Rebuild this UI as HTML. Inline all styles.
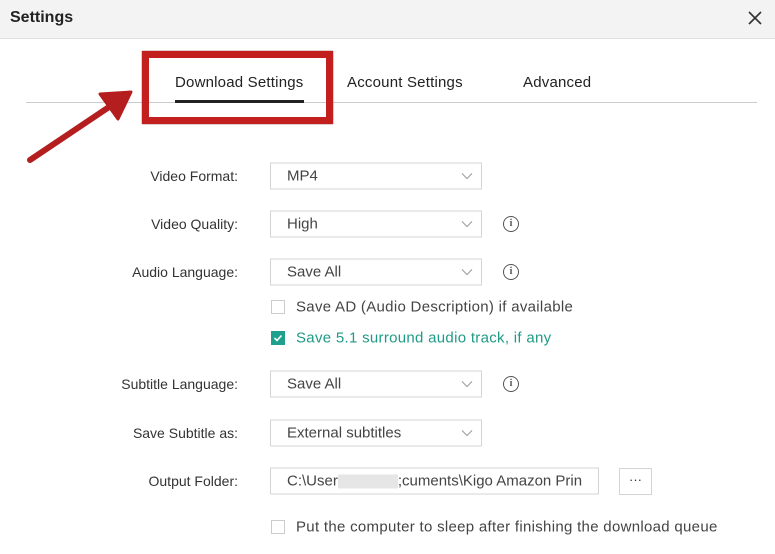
<html><head><style>
body{margin:0;width:775px;height:554px;background:#fff;font-family:"Liberation Sans",sans-serif;position:relative;overflow:hidden;color:#333}
.a{position:absolute}
.lbl{position:absolute;right:537px;font-size:14px;color:#333;transform:translateY(-50%)}
.sel{position:absolute;left:270px;width:210px;height:25px;border:1px solid #d4d4d4;transform:translateY(-50%);font-size:15px;color:#444;line-height:25px;box-sizing:content-box}
.sel span{margin-left:16px}
.sel svg{position:absolute;right:8px;top:9px}
.info{position:absolute;left:503px;width:14px;height:14px;border:1.3px solid #555;border-radius:50%;transform:translateY(-50%);font:bold 10px "Liberation Serif",serif;text-align:center;line-height:14px;color:#555}
.cb{position:absolute;left:271px;width:12px;height:12px;border:1px solid #ccc;transform:translateY(-50%)}
.ct{position:absolute;left:296px;font-size:15px;letter-spacing:0.3px;transform:translateY(-50%);color:#444;white-space:nowrap}
.tab{position:absolute;top:74px;font-size:15px;color:#222;letter-spacing:0.2px}
</style></head><body>
<div class="a" style="left:0;top:0;width:775px;height:38px;background:#f3f3f3;border-bottom:1px solid #e0e0e0"></div>
<div class="a" style="left:10px;top:9px;font-weight:bold;font-size:16px;color:#222">Settings</div>
<svg class="a" style="left:748px;top:11px" width="14" height="14"><path d="M1 1L13 13M13 1L1 13" stroke="#333" stroke-width="1.6"/></svg>
<div class="a" style="left:26px;top:102px;width:731px;height:1px;background:#ccc"></div>
<div class="tab" style="left:175px">Download Settings</div>
<div class="a" style="left:175px;top:100px;width:129px;height:3px;background:#222"></div>
<div class="tab" style="left:347px">Account Settings</div>
<div class="tab" style="left:523px">Advanced</div>
<div class="a" style="left:142px;top:51px;width:177px;height:59px;border:7px solid #c41f1f;box-shadow:0 0 1px #600"></div>
<svg class="a" style="left:0;top:0" width="775" height="554"><line x1="30" y1="160" x2="118" y2="101" stroke="#b41e1e" stroke-width="6" stroke-linecap="round"/><path d="M100 94 L131 92 L118 119 Z" fill="#b41e1e" stroke="#b41e1e" stroke-width="3" stroke-linejoin="round"/></svg>

<div class="lbl" style="top:176px">Video Format:</div>
<div class="sel" style="top:176px"><span>MP4</span><svg width="12" height="7"><path d="M1 1l5 5 5-5" fill="none" stroke="#999"/></svg></div>
<div class="lbl" style="top:224px">Video Quality:</div>
<div class="sel" style="top:224px"><span>High</span><svg width="12" height="7"><path d="M1 1l5 5 5-5" fill="none" stroke="#999"/></svg></div>
<div class="info" style="top:224px">i</div>
<div class="lbl" style="top:272px">Audio Language:</div>
<div class="sel" style="top:272px"><span>Save All</span><svg width="12" height="7"><path d="M1 1l5 5 5-5" fill="none" stroke="#999"/></svg></div>
<div class="info" style="top:272px">i</div>
<div class="cb" style="top:307px"></div><div class="ct" style="top:307px">Save AD (Audio Description) if available</div>
<div class="cb" style="top:338px;background:#1fa08c;border-color:#1fa08c"><svg width="12" height="12" style="position:absolute;left:0;top:0"><path d="M2.5 6l2.5 2.5 4.5-5" fill="none" stroke="#fff" stroke-width="1.6"/></svg></div><div class="ct" style="top:338px;color:#1f9a86">Save 5.1 surround audio track, if any</div>
<div class="lbl" style="top:384px">Subtitle Language:</div>
<div class="sel" style="top:384px"><span>Save All</span><svg width="12" height="7"><path d="M1 1l5 5 5-5" fill="none" stroke="#999"/></svg></div>
<div class="info" style="top:384px">i</div>
<div class="lbl" style="top:433px">Save Subtitle as:</div>
<div class="sel" style="top:433px"><span>External subtitles</span><svg width="12" height="7"><path d="M1 1l5 5 5-5" fill="none" stroke="#999"/></svg></div>
<div class="lbl" style="top:481px">Output Folder:</div>
<div class="sel" style="top:481px;width:327px;overflow:hidden;white-space:nowrap"><span>C:\User<span style="display:inline-block;width:60px;height:14px;background:#e6e6e6;margin:0;vertical-align:middle"></span>;cuments\Kigo Amazon Prin</span></div>
<div class="a" style="left:619px;top:468px;width:31px;height:25px;border:1px solid #d4d4d4;text-align:center;font-size:13px;line-height:22px">···</div>
<div class="cb" style="top:527px"></div><div class="ct" style="top:527px">Put the computer to sleep after finishing the download queue</div>
</body></html>
